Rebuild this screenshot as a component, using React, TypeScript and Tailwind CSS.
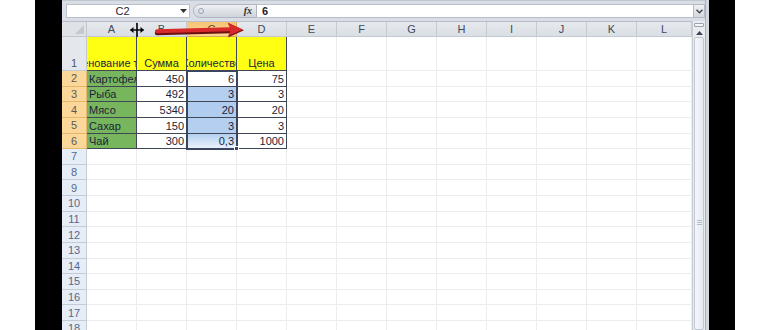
import React from 'react';

const COLS = [
  { l: 'A', w: 'w-[50px]' },
  { l: 'B', w: 'w-[50px]' },
  { l: 'C', w: 'w-[50px]' },
  { l: 'D', w: 'w-[50px]' },
  { l: 'E', w: 'w-[50px]' },
  { l: 'F', w: 'w-[50px]' },
  { l: 'G', w: 'w-[50px]' },
  { l: 'H', w: 'w-[50px]' },
  { l: 'I', w: 'w-[50px]' },
  { l: 'J', w: 'w-[50px]' },
  { l: 'K', w: 'w-[50px]' },
  { l: 'L', w: 'w-[55px]' },
];

type Cell = { t?: string; a?: 'l' | 'r' | 'c'; bg?: string };

const DATA: Cell[][] = [
  [
    { t: 'Наименование товара', a: 'c', bg: 'bg-[#ffff14]' },
    { t: 'Сумма', a: 'c', bg: 'bg-[#ffff14]' },
    { t: 'Количество', a: 'c', bg: 'bg-[#ffff14]' },
    { t: 'Цена', a: 'c', bg: 'bg-[#ffff14]' },
  ],
  [
    { t: 'Картофель', a: 'l', bg: 'bg-[#78b65e]' },
    { t: '450', a: 'r', bg: 'bg-white' },
    { t: '6', a: 'r', bg: 'bg-white' },
    { t: '75', a: 'r', bg: 'bg-white' },
  ],
  [
    { t: 'Рыба', a: 'l', bg: 'bg-[#78b65e]' },
    { t: '492', a: 'r', bg: 'bg-white' },
    { t: '3', a: 'r', bg: 'bg-[#b4cff0]' },
    { t: '3', a: 'r', bg: 'bg-white' },
  ],
  [
    { t: 'Мясо', a: 'l', bg: 'bg-[#78b65e]' },
    { t: '5340', a: 'r', bg: 'bg-white' },
    { t: '20', a: 'r', bg: 'bg-[#b0ccef]' },
    { t: '20', a: 'r', bg: 'bg-white' },
  ],
  [
    { t: 'Сахар', a: 'l', bg: 'bg-[#78b65e]' },
    { t: '150', a: 'r', bg: 'bg-white' },
    { t: '3', a: 'r', bg: 'bg-[#b4cff0]' },
    { t: '3', a: 'r', bg: 'bg-white' },
  ],
  [
    { t: 'Чай', a: 'l', bg: 'bg-[#78b65e]' },
    { t: '300', a: 'r', bg: 'bg-white' },
    { t: '0,3', a: 'r', bg: 'bg-gradient-to-b from-[#b4cff0] to-[#eaf1fb]' },
    { t: '1000', a: 'r', bg: 'bg-white' },
  ],
];

const FONT = { fontFamily: '"Liberation Sans", Arial, sans-serif' };

function DataCell({ c, w, table, tall }: { c?: Cell; w: string; table: boolean; tall?: boolean }) {
  const border = table ? 'border-[#3f4656]' : 'border-[#eaecef]';
  const align =
    c?.a === 'r' ? 'justify-end pr-[2px]' : c?.a === 'c' ? 'justify-center' : 'justify-start pl-[2px]';
  return (
    <div
      className={`${w} h-full shrink-0 border-r border-b ${border} ${c?.bg ?? 'bg-white'} flex items-end ${align} overflow-hidden ${tall ? 'pb-[0px]' : ''}`}
    >
      {c?.t && (
        <span className="whitespace-nowrap text-[11px] leading-[14px] text-[#1a1f3a] shrink-0">{c.t}</span>
      )}
    </div>
  );
}

function RowHeader({ n, sel, tall }: { n: number; sel?: boolean; tall?: boolean }) {
  return (
    <div
      className={`w-[25px] h-full shrink-0 border-r border-b flex justify-center ${
        tall ? 'items-end pb-[0px]' : 'items-center'
      } text-[11px] leading-[14px] ${
        sel
          ? 'bg-[#fbd79a] border-[#e3b86e] text-[#5d5a55]'
          : n === 1
          ? 'bg-[#e4e7eb] border-[#c3c9d1] text-[#4f5867]'
          : 'bg-[#e7edf6] border-[#c3cbd7] text-[#55698a]'
      }`}
    >
      {n}
    </div>
  );
}

export default function App() {
  const rows = Array.from({ length: 18 }, (_, i) => i + 1);
  return (
    <div className="w-[770px] h-[330px] flex bg-white overflow-hidden" style={FONT}>
      <div className="w-[35px] shrink-0 bg-white" />
      <div className="w-[27px] shrink-0 bg-black" />
      {/* window */}
      <div className="w-[643px] shrink-0 flex flex-col relative overflow-hidden">
        {/* formula bar */}
        <div className="h-[21px] shrink-0 bg-[#d9dee6] flex items-start pt-[3px] border-t border-[#c2c8d0]">
          <div className="ml-[4px] w-[124px] h-[14px] bg-white border border-[#b9c0ca] flex items-center">
            <div className="w-[111px] flex justify-center text-[11px] leading-[12px] text-[#1f2430]">C2</div>
            <div className="flex-1 flex justify-center">
              <svg width="7" height="4" viewBox="0 0 7 4">
                <path d="M0 0 L7 0 L3.5 4 Z" fill="#333" />
              </svg>
            </div>
          </div>
          <div className="ml-[3px] w-[64px] h-[14px] rounded-l-full border border-[#aeb5bf] bg-gradient-to-b from-[#eef0f3] to-[#cfd5dc] flex items-center">
            <div className="ml-[4px] w-[6px] h-[6px] rounded-full border border-[#9aa2ad]" />
            <span
              className="ml-auto mr-[4px] text-[10px] leading-[10px] italic font-bold text-[#333]"
              style={{ fontFamily: '"Liberation Serif", serif' }}
            >
              fx
            </span>
          </div>
          <div className="w-[436px] h-[14px] bg-white border-y border-[#b9c0ca] flex items-center pl-[5px] text-[11px] leading-[12px] text-[#1f2430] font-bold">
            6
          </div>
          <div className="w-[12px] h-[14px] bg-gradient-to-b from-[#eef1f4] to-[#d3d9e0] border border-[#b3bac4] flex items-center justify-center">
            <svg width="7" height="5" viewBox="0 0 7 5">
              <path d="M0.5 0.8 L3.5 3.8 L6.5 0.8" stroke="#444" strokeWidth="1.4" fill="none" />
            </svg>
          </div>
        </div>

        {/* grid + scrollbar */}
        <div className="flex flex-1 min-h-0">
          <div className="w-[630px] shrink-0 flex flex-col relative">
            {/* column header */}
            <div className="h-[16px] shrink-0 flex border-t border-[#b8bfc8]">
              <div className="w-[25px] shrink-0 h-full bg-[#dfe3e8] border-r border-b border-[#bfc6cf] relative">
                <svg className="absolute right-[2px] bottom-[2px]" width="9" height="9" viewBox="0 0 9 9">
                  <path d="M9 0 L9 9 L0 9 Z" fill="#c3c9d1" />
                </svg>
              </div>
              {COLS.map((c) => (
                <div
                  key={c.l}
                  className={`${c.w} shrink-0 h-full border-r border-b flex items-center justify-center text-[11px] leading-[12px] ${
                    c.l === 'C'
                      ? 'bg-gradient-to-b from-[#f7c574] to-[#f9d493] border-[#d9a85a] text-[#5b4a30]'
                      : 'bg-gradient-to-b from-[#e6e9ed] to-[#dadfe5] border-[#c4cad2] text-[#3e4a5b]'
                  }`}
                >
                  {c.l}
                </div>
              ))}
            </div>
            {/* rows */}
            {rows.map((n) => {
              const tall = n === 1;
              const data = DATA[n - 1];
              return (
                <div key={n} className={`${tall ? 'h-[34px]' : 'h-[15.625px]'} shrink-0 flex`}>
                  <RowHeader n={n} sel={n >= 2 && n <= 6} tall={tall} />
                  {COLS.map((c, i) => (
                    <DataCell key={c.l} c={data?.[i]} w={c.w} table={!!data && i < 4} tall={tall} />
                  ))}
                </div>
              );
            })}
            {/* selection rectangle C2:C6 */}
            <div className="absolute left-[124px] top-[49px] w-[52px] h-[80px] border-2 border-[#3b4560] pointer-events-none" />
            <div className="absolute left-[172px] top-[125px] w-[5px] h-[5px] bg-[#3b4560] border border-white" />
          </div>
          {/* vertical scrollbar */}
          <div className="w-[13px] shrink-0 flex flex-col bg-[#e9edf2] border-l border-[#c6ccd4]">
            <div className="h-[16px] shrink-0 flex flex-col items-center pt-[2px]">
              <div className="w-[10px] h-[4px] border border-[#9aa3ae] bg-[#f3f5f8] rounded-[1px]" />
              <svg className="mt-[4px]" width="7" height="4" viewBox="0 0 7 4">
                <path d="M0 4 L3.5 0 L7 4 Z" fill="#3d4553" />
              </svg>
            </div>
            <div className="flex-1 mx-[1px] bg-gradient-to-r from-[#f4f6f9] to-[#e6ebf1] border border-[#c0c7d0] rounded-[2px] flex flex-col items-center pt-[182px]">
              <div className="w-[5px] h-[1px] bg-[#b4bcc7] mb-[1px]" />
              <div className="w-[5px] h-[1px] bg-[#b4bcc7] mb-[1px]" />
              <div className="w-[5px] h-[1px] bg-[#b4bcc7]" />
            </div>
          </div>
        </div>

        {/* column resize cursor */}
        <svg className="absolute left-[67px] top-[22px]" width="16" height="16" viewBox="0 0 16 16">
          <path d="M8 1 L8 15" stroke="#000" strokeWidth="1.6" />
          <path d="M1.5 8 L14.5 8" stroke="#000" strokeWidth="1.4" />
          <path d="M1 8 L4.5 5 L4.5 11 Z" fill="#000" />
          <path d="M15 8 L11.5 5 L11.5 11 Z" fill="#000" />
        </svg>

        {/* red arrow */}
        <svg className="absolute left-[90px] top-[20px]" width="95" height="20" viewBox="0 0 95 20">
          <path d="M5 13 L78 11" stroke="#6a1010" strokeWidth="4.5" strokeLinecap="round" />
          <path d="M5 11.2 L78 9.2" stroke="#d8292b" strokeWidth="4" strokeLinecap="round" />
          <path d="M76 3 L92 10.2 L76 17.5 L79.5 10.2 Z" fill="#7a1212" />
          <path d="M75.5 2.5 L91 9.4 L76 16 L79 9.5 Z" fill="#d8292b" />
        </svg>
      </div>
      {/* window right border */}
      <div className="w-[4px] shrink-0 bg-[#d3d8df] border-l border-[#a9b1bc]" />
      <div className="w-[26px] shrink-0 bg-black" />
      <div className="w-[35px] shrink-0 bg-white" />
    </div>
  );
}
